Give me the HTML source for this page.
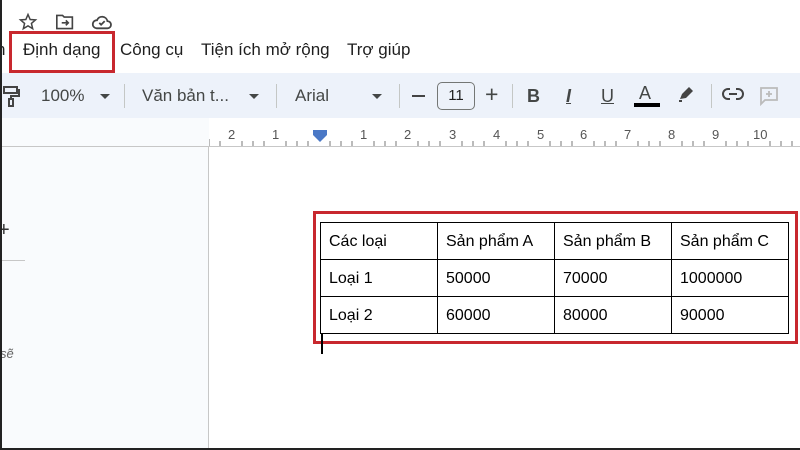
<!DOCTYPE html>
<html><head><meta charset="utf-8"><style>
*{margin:0;padding:0;box-sizing:border-box}
body{width:800px;height:450px;overflow:hidden;background:#f9fbfd;font-family:"Liberation Sans",Arial,sans-serif;position:relative;color:#1f1f1f}
.a{position:absolute}
.menu{top:40px;font-size:17px;color:#1f1f1f}
.tb{top:73px;left:0;width:800px;height:45px;background:#edf2fa}
.t{position:absolute;font-size:17px;color:#444746;top:86px}
.sep{position:absolute;top:84px;width:1px;height:24px;background:#c4c7c5}
.caret{position:absolute;top:94px;width:0;height:0;border-left:5px solid transparent;border-right:5px solid transparent;border-top:5px solid #444746}
table{border-collapse:collapse;position:absolute;left:320px;top:222px}
td{border:1.5px solid #000;width:117px;height:37px;font-size:16px;padding-left:8px;padding-top:2px;color:#000}
.num{position:absolute;top:127px;font-size:13px;color:#555}
</style></head><body>
<div class="a" style="left:0;top:0;width:800px;height:73px;background:#fff"></div>
<svg class="a" style="left:18px;top:12px" width="20" height="20" viewBox="0 0 24 24"><path d="M12 3l2.6 6 6.4.5-4.9 4.2 1.5 6.3L12 16.6 6.4 20l1.5-6.3L3 9.5 9.4 9z" fill="none" stroke="#444" stroke-width="1.8"/></svg>
<svg class="a" style="left:55px;top:13px" width="20" height="18" viewBox="0 0 24 22"><path d="M2 3h7l2 2h10v14H2z" fill="none" stroke="#444" stroke-width="2"/><path d="M8 12h8M13 9l3 3-3 3" fill="none" stroke="#444" stroke-width="2"/></svg>
<svg class="a" style="left:91px;top:13px" width="22" height="18" viewBox="0 0 24 20"><path d="M6 17h12a4 4 0 0 0 0-8 6 6 0 0 0-11.5-1A4.5 4.5 0 0 0 6 17z" fill="none" stroke="#444" stroke-width="2"/><path d="M9 11l2 2 4-4" fill="none" stroke="#444" stroke-width="2"/></svg>
<div class="a menu" style="left:-4px">n</div>
<div class="a menu" style="left:23px">Định dạng</div>
<div class="a menu" style="left:120px">Công cụ</div>
<div class="a menu" style="left:201px">Tiện ích mở rộng</div>
<div class="a menu" style="left:347px">Trợ giúp</div>
<div class="a" style="left:9px;top:31px;width:106px;height:42px;border:3px solid #c8282e"></div>
<div class="a tb"></div>
<svg class="a" style="left:2px;top:85px" width="18" height="22" viewBox="0 0 18 22"><rect x="2" y="2" width="13" height="6" fill="none" stroke="#444" stroke-width="2"/><path d="M15 5h2v6H9v3" fill="none" stroke="#444" stroke-width="2"/><rect x="7" y="14" width="4" height="7" fill="none" stroke="#444" stroke-width="2"/></svg>
<div class="t" style="left:41px">100%</div><div class="caret" style="left:100px"></div>
<div class="sep" style="left:124px"></div>
<div class="t" style="left:142px">Văn bản t...</div><div class="caret" style="left:249px"></div>
<div class="sep" style="left:276px"></div>
<div class="t" style="left:295px">Arial</div><div class="caret" style="left:372px"></div>
<div class="sep" style="left:399px"></div>
<div class="a" style="left:412px;top:95px;width:13px;height:2px;background:#444"></div>
<div class="a" style="left:437px;top:82px;width:38px;height:28px;border:1.3px solid #747775;border-radius:5px;font-size:15px;text-align:center;line-height:26px;color:#1f1f1f">11</div>
<div class="t" style="left:485px;top:81px;font-size:23px">+</div>
<div class="sep" style="left:512px"></div>
<div class="t" style="left:527px;font-weight:bold;font-size:18px">B</div>
<div class="t" style="left:566px;font-style:italic;font-weight:bold;font-size:18px;text-decoration:underline">I</div>
<div class="t" style="left:601px;font-size:18px;text-decoration:underline">U</div>
<div class="t" style="left:639px;top:83px;font-size:18px">A</div>
<div class="a" style="left:634px;top:103px;width:26px;height:4px;background:#000"></div>
<svg class="a" style="left:677px;top:85px" width="18" height="18" viewBox="0 0 18 18"><path d="M3 14l2-5 7-7 4 4-7 7z" fill="#444"/><path d="M2 16h3" stroke="#444" stroke-width="2"/></svg>
<div class="sep" style="left:711px"></div>
<svg class="a" style="left:722px;top:87px" width="22" height="14" viewBox="0 0 22 14"><path d="M8 2H6a5 5 0 0 0 0 10h2M14 2h2a5 5 0 0 1 0 10h-2M7 7h8" fill="none" stroke="#444" stroke-width="2"/></svg>
<svg class="a" style="left:759px;top:86px" width="20" height="20" viewBox="0 0 20 20"><path d="M2 2h16v12H6l-4 4z" fill="none" stroke="#bbb" stroke-width="1.8"/><path d="M10 5v6M7 8h6" stroke="#bbb" stroke-width="1.8"/></svg>
<div class="a" style="left:209px;top:118px;width:591px;height:28px;background:#fff"></div>
<div class="a" style="left:0;top:146px;width:800px;height:1px;background:#c7c7c7"></div>
<svg class="a" style="left:209px;top:136px" width="591" height="10">
<g stroke="#777" stroke-width="1">
<line x1="0" y1="3" x2="0" y2="10"/><line x1="11" y1="5" x2="11" y2="10"/><line x1="33" y1="5" x2="33" y2="10"/><line x1="44" y1="5" x2="44" y2="10"/><line x1="55" y1="5" x2="55" y2="10"/><line x1="77" y1="5" x2="77" y2="10"/><line x1="88" y1="5" x2="88" y2="10"/><line x1="99" y1="5" x2="99" y2="10"/><line x1="121" y1="5" x2="121" y2="10"/><line x1="132" y1="5" x2="132" y2="10"/><line x1="143" y1="5" x2="143" y2="10"/><line x1="165" y1="5" x2="165" y2="10"/><line x1="176" y1="5" x2="176" y2="10"/><line x1="187" y1="5" x2="187" y2="10"/><line x1="209" y1="5" x2="209" y2="10"/><line x1="220" y1="5" x2="220" y2="10"/><line x1="231" y1="5" x2="231" y2="10"/><line x1="253" y1="5" x2="253" y2="10"/><line x1="264" y1="5" x2="264" y2="10"/><line x1="275" y1="5" x2="275" y2="10"/><line x1="297" y1="5" x2="297" y2="10"/><line x1="308" y1="5" x2="308" y2="10"/><line x1="319" y1="5" x2="319" y2="10"/><line x1="341" y1="5" x2="341" y2="10"/><line x1="352" y1="5" x2="352" y2="10"/><line x1="363" y1="5" x2="363" y2="10"/><line x1="385" y1="5" x2="385" y2="10"/><line x1="396" y1="5" x2="396" y2="10"/><line x1="407" y1="5" x2="407" y2="10"/><line x1="429" y1="5" x2="429" y2="10"/><line x1="440" y1="5" x2="440" y2="10"/><line x1="451" y1="5" x2="451" y2="10"/><line x1="473" y1="5" x2="473" y2="10"/><line x1="484" y1="5" x2="484" y2="10"/><line x1="495" y1="5" x2="495" y2="10"/><line x1="517" y1="5" x2="517" y2="10"/><line x1="528" y1="5" x2="528" y2="10"/><line x1="539" y1="5" x2="539" y2="10"/><line x1="561" y1="5" x2="561" y2="10"/><line x1="572" y1="5" x2="572" y2="10"/><line x1="583" y1="5" x2="583" y2="10"/>
</g></svg>
<div class="num" style="left:228px">2</div><div class="num" style="left:272px">1</div>
<svg class="a" style="left:313px;top:130px" width="14" height="12"><path d="M0 0h14v5l-7 7-7-7z" fill="#4a78c6"/></svg>
<div class="num" style="left:360px">1</div><div class="num" style="left:404px">2</div><div class="num" style="left:449px">3</div><div class="num" style="left:493px">4</div><div class="num" style="left:537px">5</div><div class="num" style="left:580px">6</div><div class="num" style="left:624px">7</div><div class="num" style="left:668px">8</div><div class="num" style="left:712px">9</div><div class="num" style="left:753px">10</div>
<div class="a" style="left:208px;top:147px;width:1px;height:303px;background:#c7c7c7"></div>
<div class="a" style="left:209px;top:147px;width:591px;height:303px;background:#fff"></div>
<div class="a" style="left:-2px;top:219px;font-size:20px;color:#333">+</div>
<div class="a" style="left:0;top:260px;width:25px;height:1px;background:#c7c7c7"></div>
<div class="a" style="left:0;top:346px;font-size:13px;color:#666;font-style:italic">sẽ</div>
<div class="a" style="left:0;top:0;width:2px;height:450px;background:#222"></div>
<div class="a" style="left:0;top:448px;width:800px;height:2px;background:#222"></div>
<table><tr><td>Các loại</td><td>Sản phẩm A</td><td>Sản phẩm B</td><td>Sản phẩm C</td></tr>
<tr><td>Loại 1</td><td>50000</td><td>70000</td><td>1000000</td></tr>
<tr><td>Loại 2</td><td>60000</td><td>80000</td><td>90000</td></tr></table>
<div class="a" style="left:313px;top:211px;width:485px;height:133px;border:3px solid #c8282e"></div>
<div class="a" style="left:321px;top:334px;width:2px;height:20px;background:#000"></div>
</body></html>
